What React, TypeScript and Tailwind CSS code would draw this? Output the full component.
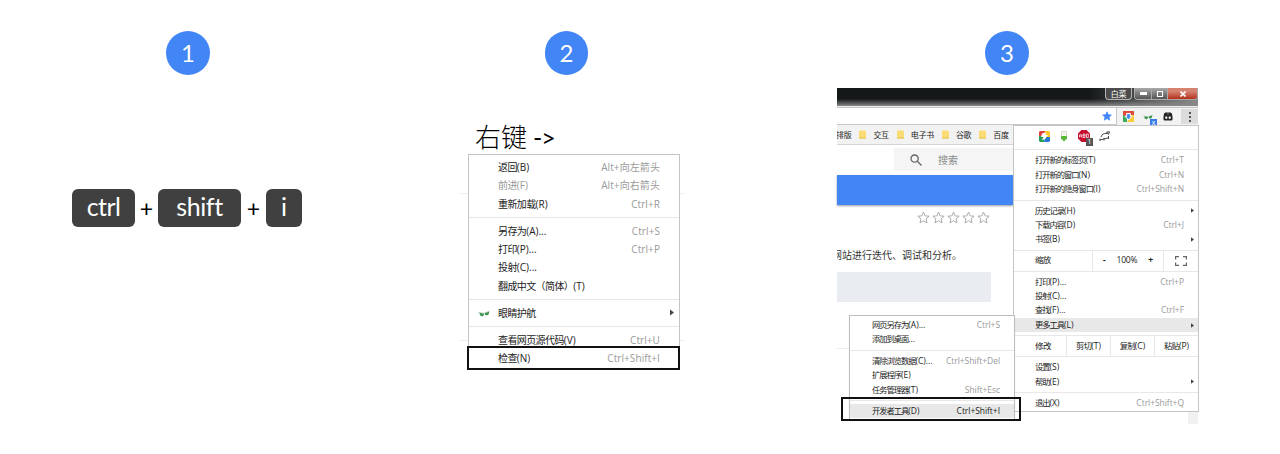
import React from "react";

const CJK = "font-['Open_Sans','Noto_Sans_CJK_SC',sans-serif]";

function Badge({ n, className }: { n: number; className: string }) {
  return (
    <div className={`flex h-11 shrink-0 items-center justify-center rounded-full bg-[#4285f4] font-['Lato',sans-serif] text-[24px] leading-none text-white ${className}`}>
      <span>{n}</span>
    </div>
  );
}

function Key({ children, className }: { children: React.ReactNode; className: string }) {
  return <div className={`flex h-[38px] items-center justify-center rounded-md bg-[#404040] pb-[3px] text-white ${className}`}>{children}</div>;
}

function Arrow({ className = "" }: { className?: string }) {
  return (
    <svg viewBox="0 0 4 6" className={className} fill="#444">
      <path d="M0 0L4 3L0 6Z" />
    </svg>
  );
}

function Glasses({ className = "" }: { className?: string }) {
  return (
    <svg viewBox="0 0 12 8" className={className}>
      <path d="M.3 3.200L5.500 4.400L11.600 2.200" fill="none" stroke="#a8cdb0" strokeWidth=".9" />
      <path d="M1.500 4L5.800 4.400C5.900 6.600 5.300 7.400 3.900 7.300C2.500 7.100 1.600 6 1.500 4ZM6.800 4.200L11 2.700C11.300 4.600 10.500 6 9 6.300C7.600 6.500 6.800 5.800 6.800 4.200Z" fill="#3c9150" />
    </svg>
  );
}

type RowProps = { label: string; hint?: string; sub?: boolean; dim?: boolean; icon?: boolean };

function BigRow({ label, hint, sub, dim, icon }: RowProps) {
  return (
    <div className="flex h-[18.33px] items-center pl-[9px] pr-[5px] text-[10px] leading-none">
      <span className="w-5 shrink-0">{icon && <Glasses className="h-2 w-3" />}</span>
      <span className={`grow whitespace-nowrap ${dim ? "text-[#999]" : "text-[#222]"}`}><SplitLabel text={label} han="tracking-[-0.6px]" /></span>
      {hint && <span className="mr-3.5 whitespace-nowrap tracking-[0.08px] text-[#999]">{hint}</span>}
      {sub && <Arrow className="h-[7px] w-1" />}
    </div>
  );
}

function SplitLabel({ text, han }: { text: string; han: string }) {
  const cut = text.search(/\(/);
  const end = cut < 0 ? text.replace(/\.+$/, "").length : cut;
  return (
    <>
      <span className={han}>{text.slice(0, end)}</span>
      <span>{text.slice(end)}</span>
    </>
  );
}

function BigLine() {
  return <div className="my-[3.83px] h-px bg-[#e6e6e6]" />;
}

function SmallRow({ label, hint, sub, className = "pl-[21px]", hintClass = "text-[#999]" }: RowProps & { className?: string; hintClass?: string }) {
  return (
    <div className={`flex h-[14.4px] items-center pr-1 text-[8.5px] leading-none text-[#222] ${className}`}>
      <span className="grow whitespace-nowrap"><SplitLabel text={label} han="text-[8.25px] tracking-[-1px]" /></span>
      {hint && <span className={`mr-2.5 whitespace-nowrap tracking-[-0.05px] ${hintClass}`}>{hint}</span>}
      {sub && <Arrow className="h-[5px] w-[3px]" />}
    </div>
  );
}

function SmallLine() {
  return <div className="my-[3px] h-px bg-[#e8e8e8]" />;
}

function EditCell({ text }: { text: string }) {
  return (
    <span className="flex w-[44px] items-center justify-center border-l border-[#e8e8e8] whitespace-nowrap">
      <SplitLabel text={text} han="text-[8.25px] tracking-[-0.7px]" />
    </span>
  );
}

function Folder({ name }: { name: string }) {
  return (
    <div className="flex items-center gap-[7px]">
      <svg viewBox="0 0 8 9" className="h-[9px] w-[7px]">
        <path d="M0 0H7L8 1V9H0Z" fill="#f9dc76" />
        <path d="M5 8H8V9H0V8" fill="#e3bc4b" />
      </svg>
      <span>{name}</span>
    </div>
  );
}

function Star({ className, fill, stroke }: { className: string; fill: string; stroke: string }) {
  return (
    <svg viewBox="0 0 24 24" className={className} fill={fill} stroke={stroke} strokeWidth="1.8">
      <path d="M12 2L15 9L22.5 9.6L16.8 14.5L18.5 22L12 18L5.500 22L7.200 14.500L1.500 9.600L9 9Z" />
    </svg>
  );
}

function TitleBar() {
  return (
    <div className="h-[18px] bg-linear-to-b from-[#141819] from-60% to-[#888]">
      <div className="ml-auto flex h-full w-[110px] items-start justify-end bg-linear-to-r from-transparent to-[#888]">
        <div className="flex h-3 w-[27px] items-center justify-center rounded-b-sm border border-t-0 border-[#b5b5b5] bg-[#4c4c4c] text-[8px] leading-none tracking-[-0.2px] text-white">白菜</div>
        <div className="ml-0.5 flex h-3 items-stretch overflow-hidden rounded-b-sm border border-t-0 border-[#aaa]">
          <div className="flex w-[16px] items-center justify-center bg-linear-to-b from-[#aaa] to-[#555]"><span className="h-[3px] w-[7px] bg-white" /></div>
          <div className="flex w-[17px] items-center justify-center border-x border-[#aaa] bg-linear-to-b from-[#aaa] to-[#555]"><span className="size-[6px] border-[1.5px] border-white" /></div>
          <div className="flex w-[29px] items-center justify-center bg-linear-to-b from-[#d68271] from-30% to-[#b52a19]">
            <svg viewBox="0 0 6 6" className="size-[6px]" stroke="white" strokeWidth="1.6"><path d="M.5.5L5.500 5.500M5.500.5L.5 5.500" /></svg>
          </div>
        </div>
      </div>
    </div>
  );
}

function Toolbar() {
  return (
    <div className="flex h-[17px] items-center justify-end bg-[#f2f2f2]">
      <div className="flex h-full grow items-center justify-end border-r border-b border-[#c8c8c8] bg-white pr-1">
        <Star className="size-[10px]" fill="#4285f4" stroke="#4285f4" />
      </div>
      <svg viewBox="0 0 11 11" className="ml-1.5 size-[11px]">
        <path d="M0 0H11V4H4V7L0 5Z" fill="#dd4b39" /><path d="M0 4L4 6V11H0Z" fill="#3cab59" /><path d="M11 4V11H4L7 7V4Z" fill="#f7cb3c" />
        <path d="M3.200 2H7.800V4.800H10L5.500 9.300L1 4.800H3.200Z" fill="#fff" /><path d="M4.200 3H6.800V5.600H8L5.500 8.200L3 5.600H4.200Z" fill="#4285f4" />
      </svg>
      <div className="relative ml-[9px] h-[11px] w-[14px]">
        <Glasses className="mt-0.5 h-[7px] w-2.5" />
        <span className="absolute right-0 -bottom-1 flex h-[7px] w-[7px] items-center justify-center bg-[#397be8] pb-px text-[7px] leading-none text-white">x</span>
      </div>
      <svg viewBox="0 0 10 10" className="ml-1.5 h-[9px] w-[10px]">
        <path d="M2 .5H8L9.500 2V4H.5V2ZM0 4H10V8.500L9 9.500H1L0 8.500Z" fill="#222" /><path d="M2 5H4.200V7.500H2ZM5.800 5H8V7.500H5.800Z" fill="#fff" /><path d="M5 1V3" stroke="#999" />
      </svg>
      <div className="ml-2 flex h-[15px] w-[17px] flex-col items-center justify-center gap-[2px] bg-[#dcdcdc]">
        <i className="size-[2px] bg-[#555]" /><i className="size-[2px] bg-[#555]" /><i className="size-[2px] bg-[#555]" />
      </div>
    </div>
  );
}

function ExtensionIcons() {
  return (
    <div className="flex h-[20px] items-center pl-[25px]">
      <svg viewBox="0 0 11 11" className="size-[11px]">
        <path d="M1 0H6L5 5H0V1Z" fill="#df4037" /><path d="M6 0H10L11 1V6H6Z" fill="#ffc72c" /><path d="M0 5H5V11H1L0 10Z" fill="#289b55" /><path d="M6 6H11V10L10 11H5Z" fill="#2878d0" />
        <path d="M3 2.500L7 1.500L6.500 4H9L6 8L3 9L4.500 6H2Z" fill="#fff" />
      </svg>
      <svg viewBox="0 0 8 11" className="ml-[10px] h-[11px] w-2">
        <path d="M1.500 .5H6.500V6H1.500Z" fill="#f4f5ee" stroke="#ccd2bd" strokeWidth=".8" /><path d="M1 5H7V7.500L4 10.500L1 7.500Z" fill="#58b937" />
      </svg>
      <div className="relative ml-[10px] size-[15px]">
        <svg viewBox="0 0 12 12" className="mt-px size-[12px]">
          <path d="M3.500 0H8.500L12 3.500V8.500L8.500 12H3.500L0 8.500V3.500Z" fill="#c70d2c" />
          <path d="M1.500 7.500V5L2.500 4L3.500 5V7.500M1.500 6H3.500M5 4V7.500H7V4H5M5 5.700H7M8.500 4V7.500H10.300V4H8.500" fill="none" stroke="#fff" strokeWidth=".7" />
        </svg>
        <span className="absolute right-0 -bottom-0.5 flex h-[8px] w-[7px] items-center justify-center bg-[#555] text-[7px] leading-none text-white">1</span>
      </div>
      <svg viewBox="0 0 12 11" className="ml-1.5 h-[11px] w-3" fill="none" stroke="#444">
        <path d="M2 6Q3 2 8 2.500M7.500 1L10.500 .8L9.500 3.500ZM1 9L9.500 6.800M1 7.500V10M5 7V9.500M9.500 5V8" />
      </svg>
    </div>
  );
}

function MainMenu() {
  return (
    <div className="absolute top-[37px] left-[176px] h-[287px] w-[186px] border border-[#c4c4c4] bg-white">
      <ExtensionIcons />
      <SmallLine />
      <SmallRow className="mt-[3.4px] pl-[21px]" label="打开新的标签页(T)" hint="Ctrl+T" />
      <SmallRow label="打开新的窗口(N)" hint="Ctrl+N" />
      <SmallRow label="打开新的隐身窗口(I)" hint="Ctrl+Shift+N" />
      <SmallLine />
      <SmallRow label="历史记录(H)" sub />
      <SmallRow label="下载内容(D)" hint="Ctrl+J" />
      <SmallRow label="书签(B)" sub />
      <div className="mt-[3px] flex h-[22px] items-stretch border-y border-[#e8e8e8] text-[8.5px] leading-none tracking-[-0.2px] text-[#222]">
        <span className="flex w-[79px] items-center border-r border-[#e8e8e8] pl-[21px] tracking-[-0.7px]">缩放</span>
        <span className="flex w-[71px] items-center justify-between border-r border-[#e8e8e8] px-2.5"><b>-</b><span>100%</span><b>+</b></span>
        <span className="flex grow items-center justify-center">
          <svg viewBox="0 0 12 10" className="h-[10px] w-3" fill="none" stroke="#666" strokeWidth="1.2"><path d="M.6 3.500V.6H4M8 .6H11.400V3.500M11.400 6.500V9.400H8M4 9.400H.6V6.500" /></svg>
        </span>
      </div>
      <SmallRow className="mt-[3px] pl-[21px]" label="打印(P)..." hint="Ctrl+P" />
      <SmallRow label="投射(C)..." />
      <SmallRow label="查找(F)..." hint="Ctrl+F" />
      <SmallRow label="更多工具(L)" sub className="bg-[#e8e8e8] pl-[21px]" />
      <div className="mt-[3px] flex h-[22px] items-stretch border-y border-[#e8e8e8] text-[8.5px] leading-none text-[#222]">
        <span className="flex w-[52px] items-center pl-[21px] tracking-[-0.6px]">修改</span>
        <EditCell text="剪切(T)" />
        <EditCell text="复制(C)" />
        <EditCell text="粘贴(P)" />
      </div>
      <SmallRow className="mt-[3px] pl-[21px]" label="设置(S)" />
      <SmallRow label="帮助(E)" sub />
      <SmallLine />
      <SmallRow label="退出(X)" hint="Ctrl+Shift+Q" />
    </div>
  );
}

function ToolsMenu() {
  return (
    <div className="absolute top-[227px] left-[12px] h-[105px] w-[166px] border border-[#bdbdbd] bg-white pt-[2px] shadow-xs">
      <SmallRow className="pl-[22px]" label="网页另存为(A)..." hint="Ctrl+S" />
      <SmallRow className="pl-[22px]" label="添加到桌面..." />
      <SmallLine />
      <SmallRow className="pl-[22px]" label="清除浏览数据(C)..." hint="Ctrl+Shift+Del" />
      <SmallRow className="pl-[22px]" label="扩展程序(E)" />
      <SmallRow className="pl-[22px]" label="任务管理器(T)" hint="Shift+Esc" />
      <SmallLine />
      <SmallRow className="bg-[#e8e8e8] pl-[22px]" label="开发者工具(D)" hint="Ctrl+Shift+I" hintClass="text-[#222]" />
    </div>
  );
}

function Browser() {
  return (
    <div className={`relative mt-[13px] h-[336px] w-[361px] bg-white ${CJK}`}>
      <TitleBar />
      <div className="h-[2px] border-b border-[#c4c4c4] bg-[#eee]" />
      <Toolbar />
      <div className="flex h-5 w-[176px] items-center gap-2 overflow-hidden border-b border-[#d5d5d5] bg-[#f2f2f2] text-[8px] leading-none tracking-[-0.3px] whitespace-nowrap text-[#222]">
        <span className="-ml-px">排版</span>
        <Folder name="交互" /><Folder name="电子书" /><Folder name="谷歌" /><Folder name="百度" />
      </div>
      <div className="mt-[3px] ml-[57px] flex h-[23px] w-[119px] items-center bg-[#f5f5f5] pl-4 text-[10px] leading-none text-[#888]">
        <svg viewBox="0 0 12 12" className="mr-4 size-3" fill="none" stroke="#666" strokeWidth="1.3"><circle cx="4.600" cy="4.600" r="3.600" /><path d="M7.300 7.300L11.500 11.500" /></svg>
        搜索
      </div>
      <div className="mt-1 h-[30px] w-[176px] bg-[#4285f4] shadow-[0_1px_2px_#999]" />
      <div className="mt-[6px] ml-[80px] flex gap-[2px]">
        {[0, 1, 2, 3, 4].map((i) => <Star key={i} className="size-[13px]" fill="none" stroke="#aaa" />)}
      </div>
      <div className="mt-[23px] flex h-[15px] w-[170px] items-center overflow-hidden text-[10px] leading-none whitespace-nowrap text-[#333]"><span className="-ml-[5px]">网站进行迭代、调试和分析。</span></div>
      <div className="mt-[10px] h-[30px] w-[154px] bg-[#e9edf1]" />
      <div className="mt-[46px] h-px w-[176px] bg-[#eee]" />
      <div className="absolute right-0 bottom-0 h-[13px] w-[10px] bg-[#f1f1f1]" />
      <MainMenu />
      <ToolsMenu />
      <div className="absolute top-[309px] left-[4px] h-[24px] w-[180px] border-2 border-[#111]" />
    </div>
  );
}

export default function App() {
  return (
    <main className="flex h-[454px] w-[1280px] items-start overflow-hidden bg-white pt-[31px]">
      <section className="w-[459px]">
        <Badge n={1} className="ml-[166px] w-11" />
        <div className="mt-[114px] ml-[72px] flex items-center font-['Lato',sans-serif] text-[25px] leading-none">
          <Key className="w-[63px] tracking-[-0.6px]">ctrl</Key>
          <span className="w-[23px] text-center text-[23px]">+</span>
          <Key className="w-[83px] tracking-[-0.4px]">shift</Key>
          <span className="w-[25px] text-center text-[23px]">+</span>
          <Key className="w-9">i</Key>
        </div>
      </section>
      <section className="w-[378px]">
        <Badge n={2} className="ml-[86px] w-[43px]" />
        <div className="mt-[45px] ml-4 flex h-[34px] items-center font-['Lato','Noto_Sans_CJK_SC',sans-serif] text-[26px] leading-none font-light">
          <span>右键</span><span className="ml-1.5 text-[25px] font-normal tracking-[-1px]">-&gt;</span>
        </div>
        <div className="flex h-[216px] w-[226px] flex-col bg-[linear-gradient(#eee,#eee),linear-gradient(#eee,#eee)] bg-[length:100%_1px] bg-[position:0_39px,0_186px] bg-no-repeat">
          <div className={`relative ml-[9px] h-[215px] w-[212px] border border-[#c4c4c4] bg-white pt-[3px] ${CJK}`}>
            <BigRow label="返回(B)" hint="Alt+向左箭头" />
            <BigRow label="前进(F)" hint="Alt+向右箭头" dim />
            <BigRow label="重新加载(R)" hint="Ctrl+R" />
            <BigLine />
            <BigRow label="另存为(A)..." hint="Ctrl+S" />
            <BigRow label="打印(P)..." hint="Ctrl+P" />
            <BigRow label="投射(C)..." />
            <BigRow label="翻成中文（简体）(T)" />
            <BigLine />
            <BigRow label="眼睛护航" sub icon />
            <BigLine />
            <BigRow label="查看网页源代码(V)" hint="Ctrl+U" />
            <BigRow label="检查(N)" hint="Ctrl+Shift+I" />
            <div className="absolute top-[191px] -left-[2px] h-[24px] w-[213px] border-2 border-[#111]" />
          </div>
        </div>
      </section>
      <section>
        <Badge n={3} className="ml-[148px] w-11" />
        <Browser />
      </section>
    </main>
  );
}
